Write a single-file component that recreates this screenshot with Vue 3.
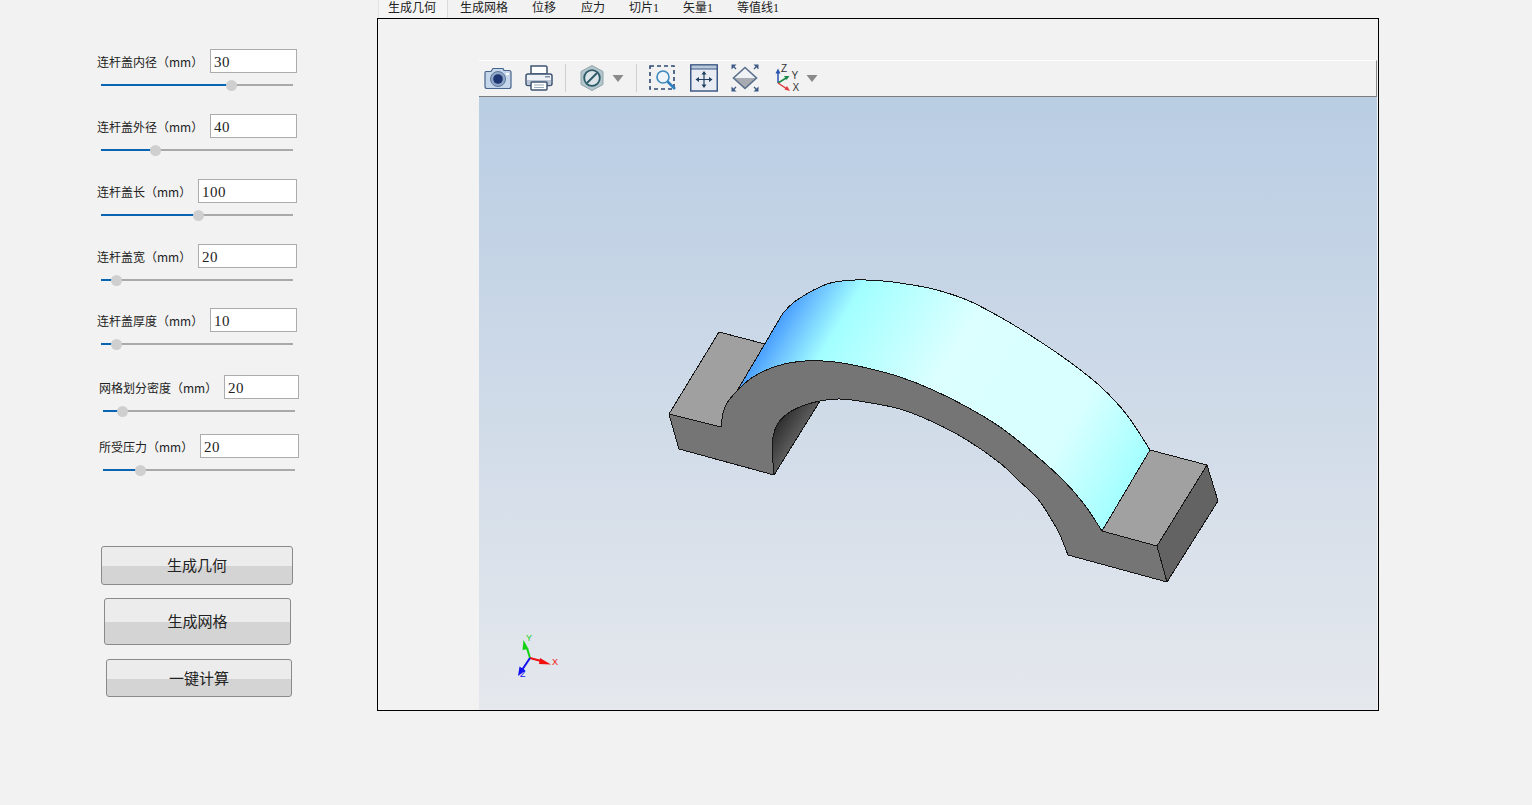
<script setup>
// slider rows: top = gap above the row, pos = handle position along the track
const params = [
  { label: '连杆盖内径（mm）', value: '30', width: 87, top: 49, pos: 130, shift: 0 },
  { label: '连杆盖外径（mm）', value: '40', width: 87, top: 28, pos: 54, shift: 0 },
  { label: '连杆盖长（mm）', value: '100', width: 99, top: 28, pos: 97, shift: 0 },
  { label: '连杆盖宽（mm）', value: '20', width: 99, top: 28, pos: 15, shift: 0 },
  { label: '连杆盖厚度（mm）', value: '10', width: 87, top: 27, pos: 15, shift: 0 },
  { label: '网格划分密度（mm）', value: '20', width: 75, top: 30, pos: 19, shift: 2 },
  { label: '所受压力（mm）', value: '20', width: 99, top: 22, pos: 37, shift: 2 },
]

const buttons = [
  { text: '生成几何', cls: 'btn-a' },
  { text: '生成网格', cls: 'btn-b' },
  { text: '一键计算', cls: 'btn-c' },
]

const tabs = [
  { text: '生成几何', cls: 'tab-active' },
  { text: '生成网格', cls: 'tab-2' },
  { text: '位移', cls: 'tab-3' },
  { text: '应力', cls: 'tab-4' },
  { text: '切片1', cls: 'tab-5' },
  { text: '矢量1', cls: 'tab-6' },
  { text: '等值线1', cls: 'tab-7' },
]

// catmull-rom through the points, without the leading M
const curve = (pts) => {
  let d = ''
  for (let i = 0; i < pts.length - 1; i++) {
    const p0 = pts[i - 1] || pts[i]
    const p1 = pts[i]
    const p2 = pts[i + 1]
    const p3 = pts[i + 2] || p2
    const c1x = p1[0] + (p2[0] - p0[0]) / 6
    const c1y = p1[1] + (p2[1] - p0[1]) / 6
    const c2x = p2[0] - (p3[0] - p1[0]) / 6
    const c2y = p2[1] - (p3[1] - p1[1]) / 6
    d += `C${c1x} ${c1y} ${c2x} ${c2y} ${p2[0]} ${p2[1]} `
  }
  return d
}

const outer = [[721, 427], [723, 413], [727, 403], [737, 391], [753, 377], [777, 366], [805, 361], [835, 362], [867, 368], [900, 377], [933, 390], [967, 407], [1000, 427], [1033, 453], [1063, 480], [1084, 504], [1102, 531]]
const outerFromBand = outer.slice(3)
const inner = [[772, 450], [773, 437], [778, 423], [790, 412], [805, 405], [820, 401], [840, 399], [865, 402], [900, 409], [933, 422], [967, 440], [1000, 463], [1018, 480], [1037, 498], [1050, 517], [1060, 535], [1068, 555]]
const bore = inner.slice(0, 6)
const top = [[783, 313], [797, 300], [827, 284], [855, 280], [883, 281], [900, 283], [933, 289], [967, 300], [1000, 317], [1033, 337], [1067, 360], [1100, 386], [1127, 415], [1150, 450]]

const rev = (a) => [...a].reverse()

const frontPath = `M669 414 L679 449 L774 475 L772 450 ${curve(inner)} L1167 582 L1157 546 L1102 531 ${curve(rev(outer))} Z`
const borePath = `M774 475 L772 450 ${curve(bore)} Z`
const bandPath = `M737 391 L783 313 ${curve(top)} L1102 531 ${curve(rev(outerFromBand))} Z`
const leftPadPath = `M719 332 L669 414 L721 427 ${curve(outer.slice(0, 4))} L765 344 Z`
</script>

<template>
  <div class="page">
    <aside class="side">
      <div
        v-for="p in params"
        :key="p.label"
        class="param"
        :style="{ marginTop: p.top + 'px', marginLeft: p.shift + 'px' }"
      >
        <div class="param-row">
          <label class="param-label">{{ p.label }}</label>
          <input class="param-input" :value="p.value" :style="{ width: p.width + 'px' }" />
        </div>
        <div class="slider">
          <div class="slider-fill" :style="{ width: p.pos + 'px' }"></div>
          <div class="slider-handle" :style="{ left: p.pos + 'px' }"></div>
        </div>
      </div>

      <div class="actions">
        <button v-for="b in buttons" :key="b.text" class="action" :class="b.cls">{{ b.text }}</button>
      </div>
    </aside>

    <main class="work">
      <div class="tabs">
        <div v-for="t in tabs" :key="t.text" class="tab" :class="t.cls">{{ t.text }}</div>
      </div>

      <div class="frame">
        <div class="viewer">
          <div class="toolbar">
            <!-- camera -->
            <svg class="icon first" width="28" height="28" viewBox="0 0 28 28">
              <path d="M2 7.500h5l2-3h10l1 2h5q2 0 2 2v14q0 2-2 2H3q-2 0-2-2V9q0-1.500 1-1.500z" fill="#c5d6ea" stroke="#47648c" stroke-width="1.200" />
              <circle cx="14" cy="15" r="7.500" fill="#8fa6c6" stroke="#5c77a0" />
              <circle cx="14" cy="15" r="4.800" fill="#1d3570" />
              <rect x="22" y="9" width="3" height="2" fill="#fff" />
            </svg>
            <!-- printer -->
            <svg class="icon" width="28" height="28" viewBox="0 0 28 28">
              <path d="M6 10V2h15l1 1v7z" fill="#fff" stroke="#3f5573" stroke-width="1.500" />
              <rect x="1" y="10" width="26" height="11.500" rx="2" fill="#eef2f6" stroke="#3f5573" stroke-width="1.500" />
              <rect x="2" y="16" width="24" height="4.800" fill="#b9c5d4" />
              <rect x="20" y="12" width="5" height="1.500" fill="#7c90a8" />
              <rect x="6" y="18" width="16" height="8" rx="1" fill="#fff" stroke="#3f5573" stroke-width="1.500" />
              <path d="M9 21h10M9 23.500h10" stroke="#9aa9ba" />
            </svg>
            <span class="sep sep-first"></span>
            <!-- hexagon -->
            <svg class="icon hex" width="28" height="28" viewBox="0 0 28 28">
              <path d="M14 1.500 25 7.500v13L14 26.500 3 20.500v-13z" fill="#b4c6cb" stroke="#8fa6ac" />
              <circle cx="14" cy="14" r="7.800" fill="#dbe5e8" stroke="#2c5a68" stroke-width="1.800" />
              <path d="M9 19 19 9" stroke="#2c5a68" stroke-width="2" />
            </svg>
            <svg class="caret" width="12" height="7" viewBox="0 0 12 7"><path d="M0.500 0h11L6 7z" fill="#8a8a8a" /></svg>
            <span class="sep sep-second"></span>
            <!-- zoom box -->
            <svg class="icon zoom" width="28" height="28" viewBox="0 0 28 28">
              <rect x="1" y="2" width="24" height="23" fill="none" stroke="#2d4a72" stroke-width="1.600" stroke-dasharray="4 3" />
              <circle cx="14" cy="13" r="6" fill="#eef4f9" stroke="#3f88bd" stroke-width="1.600" />
              <path d="M18.500 17.500 26 25" stroke="#2f80bd" stroke-width="2.600" />
            </svg>
            <!-- fit -->
            <svg class="icon fit" width="28" height="28" viewBox="0 0 28 28">
              <rect x="0.750" y="1" width="26.500" height="26" fill="#e9edf3" stroke="#3d5a84" stroke-width="1.500" />
              <rect x="1" y="1" width="26" height="4" fill="#b9c7da" stroke="#3d5a84" />
              <path d="M14 8v15M6.500 15.500h15" stroke="#23405f" stroke-width="1.200" />
              <path d="M14 7l-2.500 3.500h5zM14 24l-2.500-3.500h5zM5.500 15.500 9 13v5zM22.500 15.500 19 13v5z" fill="#23405f" />
            </svg>
            <!-- fit all -->
            <svg class="icon" width="28" height="28" viewBox="0 0 28 28">
              <path d="M14 3.500 25.500 14H2.500z" fill="#f0f2f5" />
              <path d="M2.500 14H25.500L14 24.500z" fill="#a8acb2" />
              <path d="M14 3.500 25.500 14 14 24.500 2.500 14z" fill="none" stroke="#5b6f8c" stroke-width="1.600" />
              <path d="M5 5 2 2M23 5l3-3M5 23l-3 3M23 23l3 3" stroke="#3d5a84" stroke-width="1.300" />
              <path d="M0.500 0.500h5l-5 5zM27.500 0.500v5l-5-5zM0.500 27.500v-5l5 5zM27.500 27.500h-5l5-5z" fill="#3d5a84" />
            </svg>
            <!-- axes -->
            <svg class="icon axes" width="28" height="28" viewBox="0 0 28 28">
              <path d="M4 19V8" stroke="#2a52b0" stroke-width="1.500" />
              <path d="M4 4.500 1.500 9.500h5z" fill="#2a52b0" />
              <path d="M4 19l9-5.500" stroke="#1d8a4a" stroke-width="1.500" />
              <path d="M15.500 12l-5.500 0 2.500 4z" fill="#1d8a4a" />
              <path d="M4 19l9 6" stroke="#e03a3a" stroke-width="1.500" />
              <path d="M16 27l-3-5-2.500 3.500z" fill="#e03a3a" />
              <text x="7" y="7.500" class="axis-text">Z</text>
              <text x="17.500" y="15" class="axis-text">Y</text>
              <text x="18.500" y="27" class="axis-text">X</text>
            </svg>
            <svg class="caret caret-last" width="12" height="7" viewBox="0 0 12 7"><path d="M0.500 0h11L6 7z" fill="#8a8a8a" /></svg>
          </div>

          <div class="scene">
            <svg class="model" width="898" height="613" viewBox="479 97 898 613" shape-rendering="crispEdges">
              <defs>
                <linearGradient id="band" gradientUnits="userSpaceOnUse" x1="745" y1="350" x2="1087" y2="555">
                  <stop offset="0" stop-color="#2f86ff" />
                  <stop offset="0.08" stop-color="#6cc0ff" />
                  <stop offset="0.17" stop-color="#a2ffff" />
                  <stop offset="0.45" stop-color="#dcffff" />
                  <stop offset="0.8" stop-color="#d8ffff" />
                  <stop offset="1" stop-color="#a4ffff" />
                </linearGradient>
                <linearGradient id="bore" gradientUnits="userSpaceOnUse" x1="775" y1="425" x2="815" y2="450">
                  <stop offset="0" stop-color="#2c2c2c" />
                  <stop offset="1" stop-color="#868686" />
                </linearGradient>
              </defs>
              <g stroke="#151515" stroke-width="1" stroke-linejoin="round">
                <path :d="leftPadPath" fill="#a0a0a0" />
                <path :d="bandPath" fill="url(#band)" />
                <path d="M1150 450 L1207 465 L1157 546 L1102 531 Z" fill="#a1a1a1" />
                <path d="M1207 465 L1218 501 L1167 582 L1157 546 Z" fill="#636363" />
                <path :d="borePath" fill="url(#bore)" />
                <path :d="frontPath" fill="#757575" />
              </g>
              <!-- corner triad -->
              <g shape-rendering="auto">
                <path d="M530 658 L527 648" stroke="#12d012" stroke-width="2" />
                <path d="M523.500 640 L522.500 650 L528.500 649 Z" fill="#12d012" />
                <path d="M530 658 L541 661" stroke="#f01010" stroke-width="2" />
                <path d="M551 664.500 L540 658 L539 664 Z" fill="#f01010" />
                <path d="M530 658 L522 670" stroke="#1010f0" stroke-width="2" />
                <path d="M518 676 L519.500 666.500 L525.500 670.500 Z" fill="#1010f0" />
                <text x="526" y="641" class="triad triad-y">Y</text>
                <text x="552" y="665" class="triad triad-x">X</text>
                <text x="520" y="677" class="triad triad-z">Z</text>
              </g>
            </svg>
          </div>
        </div>
      </div>
    </main>
  </div>
</template>

<style>
html,
body {
  margin: 0;
  background: #f2f2f2;
}
</style>

<style scoped>
.page {
  display: flex;
  width: 1532px;
  height: 805px;
  overflow: hidden;
  background: #f2f2f2;
  font-family: "Noto Sans CJK SC", "Liberation Sans", sans-serif;
  color: #222;
}

.side {
  width: 377px;
  flex: none;
  padding-left: 97px;
  box-sizing: border-box;
}
.param {
  width: 200px;
}
.param-row {
  display: flex;
  justify-content: space-between;
  align-items: flex-start;
  height: 24px;
}
.param-label {
  padding-top: 1px;
  font-size: 12px;
  line-height: 24px;
  white-space: nowrap;
}
.param-input {
  height: 24px;
  box-sizing: border-box;
  border: 1px solid #acacac;
  padding: 2px 3px 0;
  background: #fff;
  color: #222;
  font-family: "Liberation Serif", serif;
  font-size: 15px;
  letter-spacing: 0.5px;
  outline: none;
  border-radius: 0;
}
.slider {
  position: relative;
  width: 192px;
  height: 2px;
  margin: 11px 0 0 4px;
  background: #a9a9a9;
}
.slider-fill {
  height: 2px;
  background: #0a64b4;
}
.slider-handle {
  position: absolute;
  top: -4.500px;
  width: 11px;
  height: 11px;
  margin-left: -5.500px;
  border-radius: 50%;
  background: #cfcfcf;
}

.actions {
  display: flex;
  flex-direction: column;
  align-items: flex-start;
  margin-top: 75px;
}
.action {
  box-sizing: border-box;
  border: 1px solid #8a8a8a;
  border-radius: 3px;
  padding: 0 0 2px;
  color: #222;
  font-family: inherit;
  font-size: 15px;
  background: linear-gradient(#ececec 0 52%, #d4d4d4 52% 100%);
}
.btn-a {
  width: 192px;
  height: 39px;
  margin-left: 4px;
}
.btn-b {
  width: 187px;
  height: 47px;
  margin: 13px 0 0 7px;
}
.btn-c {
  width: 186px;
  height: 38px;
  margin: 14px 0 0 9px;
}

.work {
  width: 1002px;
  flex: none;
}
.tabs {
  display: flex;
  height: 18px;
  padding-left: 1px;
  font-family: "Liberation Serif", "Noto Sans CJK SC", serif;
  font-size: 12px;
  line-height: 17px;
}
.tab {
  white-space: nowrap;
}
.tab-active {
  width: 70px;
  box-sizing: border-box;
  height: 18px;
  padding-left: 9px;
  background: #f5f5f5;
  border-left: 1px solid #e2e2e2;
  border-right: 1px solid #dadada;
}
.tab-2 {
  margin-left: 12px;
}
.tab-3 {
  margin-left: 24px;
}
.tab-4 {
  margin-left: 25px;
}
.tab-5 {
  margin-left: 24px;
}
.tab-6 {
  margin-left: 24px;
}
.tab-7 {
  margin-left: 24px;
}

.frame {
  box-sizing: border-box;
  height: 693px;
  border: 1px solid #000;
  padding: 41px 1px 0 101px;
}
.viewer {
  display: flex;
  flex-direction: column;
  height: 100%;
}
.toolbar {
  display: flex;
  align-items: center;
  flex: none;
  box-sizing: border-box;
  height: 37px;
  padding-bottom: 1px;
  background: #f2f2f2;
  border-top: 1px solid #fff;
  border-bottom: 1px solid #7c7c7c;
  border-right: 1px solid #8a8a8a;
}
.icon {
  flex: none;
  margin-left: 13px;
}
.icon.first {
  margin-left: 5px;
}
.icon.hex {
  margin-left: 12px;
}
.icon.zoom {
  margin-left: 12px;
}
.icon.fit {
  margin-left: 13px;
}
.icon.axes {
  margin-left: 15px;
}
.caret {
  flex: none;
  margin-left: 6px;
}
.caret-last {
  margin-left: 4px;
}
.sep {
  flex: none;
  width: 1px;
  height: 28px;
  background: #d0d0d0;
}
.sep-first {
  margin-left: 12px;
}
.sep-second {
  margin-left: 12px;
}
.axis-text {
  font-family: "Liberation Sans", sans-serif;
  font-size: 10px;
  fill: #333;
}
.scene {
  flex: 1;
  min-height: 0;
  background: linear-gradient(#b9cde3, #e5e8ed);
}
.model {
  display: block;
}
.triad {
  font-family: "Liberation Sans", sans-serif;
  font-size: 9px;
}
.triad-y {
  fill: #12d012;
}
.triad-x {
  fill: #f01010;
}
.triad-z {
  fill: #1010f0;
}
</style>
